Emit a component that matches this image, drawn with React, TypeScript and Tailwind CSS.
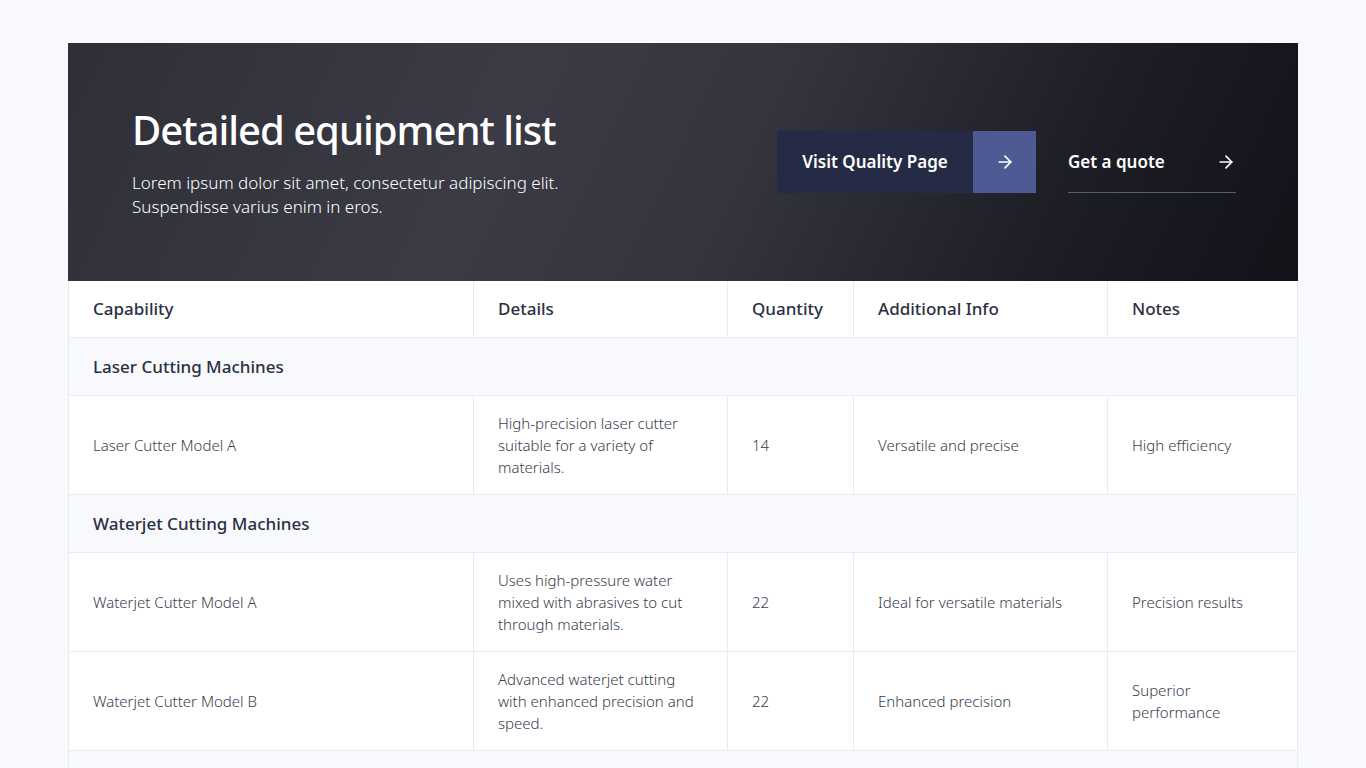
import { ArrowRight } from 'lucide-react';

const columns = [
  { label: 'Capability', w: 'w-[404px]' },
  { label: 'Details', w: 'w-[254px]' },
  { label: 'Quantity', w: 'w-[126px]' },
  { label: 'Additional Info', w: 'w-[254px]' },
  { label: 'Notes', w: 'flex-1' },
];

const groups = [
  {
    name: 'Laser Cutting Machines',
    rows: [
      ['Laser Cutter Model A', 'High-precision laser cutter suitable for a variety of materials.', '14', 'Versatile and precise', 'High efficiency'],
    ],
  },
  {
    name: 'Waterjet Cutting Machines',
    rows: [
      ['Waterjet Cutter Model A', 'Uses high-pressure water mixed with abrasives to cut through materials.', '22', 'Ideal for versatile materials', 'Precision results'],
      ['Waterjet Cutter Model B', 'Advanced waterjet cutting with enhanced precision and speed.', '22', 'Enhanced precision', 'Superior performance'],
    ],
  },
  { name: '', rows: [] },
];

const App = () => {
  return (
    <div className="min-h-screen bg-[#f8f9fd] px-[68px] pt-[43px] text-[#2b2f42]" style={{ fontFamily: '"Noto Sans", sans-serif' }}>
      {/* Hero */}
      <section className="flex h-[238px] items-center justify-between bg-[linear-gradient(115deg,#2e2f37_0%,#3a3b44_35%,#33343c_55%,#1c1d25_80%,#121319_100%)] pl-16 pr-[62px]">
        <div className="text-white">
          <h1 className="mb-4 text-[40px] font-medium leading-tight tracking-[-1px]">Detailed equipment list</h1>
          <p className="text-[17px] font-light leading-[24px] text-white">
            Lorem ipsum dolor sit amet, consectetur adipiscing elit.
            <br />
            Suspendisse varius enim in eros.
          </p>
        </div>
        <div className="flex items-center">
          <a className="flex h-[62px] w-[196px] items-center justify-center bg-[#262b45] text-[17px] font-semibold text-white">Visit Quality Page</a>
          <span className="flex h-[62px] w-[63px] items-center justify-center bg-[#4d5a93] text-white">
            <ArrowRight className="h-5 w-5" />
          </span>
          <a className="ml-8 flex h-[62px] w-[168px] items-center justify-between border-b border-[#5a5c6a] text-[17px] font-semibold text-white">
            Get a quote
            <ArrowRight className="h-5 w-5" />
          </a>
        </div>
      </section>

      {/* Table */}
      <div className="border-x border-[#e9ebf2] bg-white">
        <div className="flex h-[57px] border-b border-[#e9ebf2] text-[17px] font-medium">
          {columns.map((c, i) => (
            <div key={c.label} className={`${c.w} flex items-center px-6 ${i > 0 ? 'border-l border-[#e9ebf2]' : ''}`}>
              {c.label}
            </div>
          ))}
        </div>
        {groups.map((g, gi) => (
          <div key={gi}>
            <div className="flex h-[58px] items-center border-b border-[#e9ebf2] bg-[#f8f9fd] px-6 text-[17px] font-medium">{g.name}</div>
            {g.rows.map((r) => (
              <div key={r[0]} className="flex h-[99px] border-b border-[#e9ebf2] text-[15px] font-light leading-[22px] text-[#3a3d4d]">
                {r.map((cell, i) => (
                  <div key={i} className={`${columns[i].w} flex items-center px-6 ${i > 0 ? 'border-l border-[#e9ebf2]' : ''}`}>
                    {cell}
                  </div>
                ))}
              </div>
            ))}
          </div>
        ))}
      </div>
    </div>
  );
};

export default App;
